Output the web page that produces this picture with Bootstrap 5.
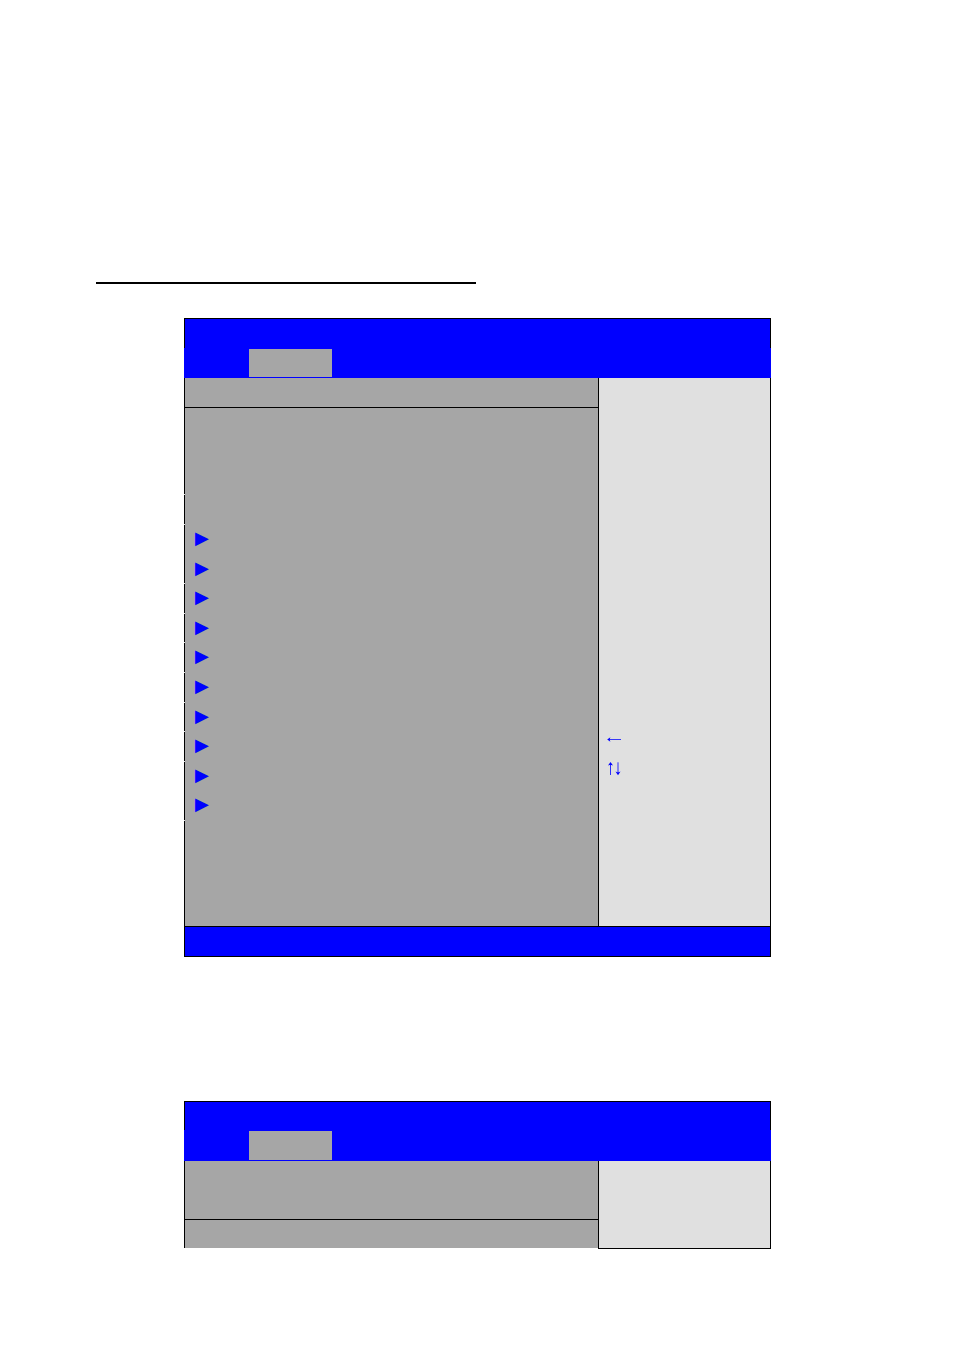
<!DOCTYPE html>
<html lang="en">
<head>
<meta charset="utf-8">
<meta name="viewport" content="width=device-width, initial-scale=1">
<title>BIOS Setup</title>
<link href="https://cdn.jsdelivr.net/npm/bootstrap@5.3.0/dist/css/bootstrap.min.css" rel="stylesheet">
<style>
  :root { --bios-blue: #0000ff; --bios-gray: #a6a6a6; --bios-light: #e0e0e0; }
  body { background: #fff; color: var(--bios-blue); font-family: "Liberation Serif", serif; }
  .page { padding: 282px 96px 101px; }
  .heading-rule { width: 380px; max-width: 100%; height: 2px; background: #000; opacity: 1; border: 0; margin: 0 0 34px; }
  .bios { margin: 0 87px 144px 88px; }
  .bios:last-child { margin-bottom: 0; }
  .bios-title { height: 30px; background: var(--bios-blue); border: 1px solid #000; border-bottom: 0; }
  .bios-tabs { height: 30px; background: var(--bios-blue); padding: 1px 0 1px 65px; }
  .bios-title-short { height: 29px; }
  .bios-tabs-tall { height: 31px; }
  .bios-tab { width: 83px; background: var(--bios-gray); }
  .bios-main { background: var(--bios-gray); border-left: 1px solid #000; }
  .bios-main-open { margin-bottom: 1px; }
  .bios-head { height: 30px; border-bottom: 1px solid #000; }
  .bios-head-tall { height: 59px; }
  .bios-help { width: 173px; background: var(--bios-light); border: 1px solid #000; border-top: 0; border-bottom: 0; }
  .bios-help-closed { border-bottom: 1px solid #000; }
  .bios-foot { height: 31px; background: var(--bios-blue); border: 1px solid #000; }
  .info-rows { padding-top: 86px; }
  .info-row { height: 30px; }
  .menu-rows { height: 296px; }
  .menu-item { padding-left: 10px; font: 18px/27px "DejaVu Sans", sans-serif; }
  /* small breaks in the frame where two rows meet */
  .notch { position: relative; }
  .notch::before { content: ""; position: absolute; left: -1px; top: 0; width: 1px; height: 1px; background: #ddd; }
  .menu-end { height: 106px; }
  .keys { padding: 347px 8px 0; }
  .key-row { height: 29px; }
  .short-row { height: 28px; }
</style>
</head>
<body>
<main class="page">
  <hr class="heading-rule">

  <section class="bios">
    <div class="bios-title"></div>
    <div class="bios-tabs d-flex"><div class="bios-tab"></div></div>
    <div class="d-flex">
      <div class="bios-main flex-grow-1">
        <div class="bios-head"></div>
        <div class="info-rows"><div class="info-row notch"></div></div>
        <ul class="menu-rows list-unstyled d-flex flex-column mb-0">
          <li class="menu-item notch flex-fill">▶</li>
          <li class="menu-item flex-fill">▶</li>
          <li class="menu-item notch flex-fill">▶</li>
          <li class="menu-item notch flex-fill">▶</li>
          <li class="menu-item notch flex-fill">▶</li>
          <li class="menu-item notch flex-fill">▶</li>
          <li class="menu-item notch flex-fill">▶</li>
          <li class="menu-item notch flex-fill">▶</li>
          <li class="menu-item notch flex-fill">▶</li>
          <li class="menu-item flex-fill">▶</li>
        </ul>
        <div class="menu-end notch"></div>
      </div>
      <aside class="bios-help flex-shrink-0">
        <div class="keys">
          <div class="key-row d-flex align-items-center">
            <svg width="15" height="15" viewBox="0 0 15 15" role="img" aria-label="Left arrow">
              <path d="M1 7.5H14" stroke="#00f" stroke-opacity=".75" fill="none"/>
              <path d="M.2 7.5L3.4 5.2L2.6 7.5L3.4 9.8Z" fill="#00f"/>
            </svg>
          </div>
          <div class="key-row d-flex align-items-center">
            <svg width="15" height="15" viewBox="0 0 15 15" role="img" aria-label="Up and down arrows">
              <path d="M3.5 2V14" stroke="#00f" stroke-opacity=".8" fill="none"/>
              <path d="M3.5 1L6 4.6L3.5 3.8L1 4.6Z" fill="#00f"/>
              <path d="M11 1.3V13" stroke="#00f" stroke-opacity=".8" fill="none"/>
              <path d="M11 14.2L8.5 10.6L11 11.4L13.5 10.6Z" fill="#00f"/>
            </svg>
          </div>
        </div>
      </aside>
    </div>
    <div class="bios-foot"></div>
  </section>

  <section class="bios">
    <div class="bios-title bios-title-short"></div>
    <div class="bios-tabs bios-tabs-tall d-flex"><div class="bios-tab"></div></div>
    <div class="d-flex">
      <div class="bios-main bios-main-open flex-grow-1">
        <div class="bios-head bios-head-tall"></div>
        <div class="short-row"></div>
      </div>
      <aside class="bios-help bios-help-closed flex-shrink-0"></aside>
    </div>
  </section>
</main>
<script src="https://cdn.jsdelivr.net/npm/bootstrap@5.3.0/dist/js/bootstrap.bundle.min.js"></script>
</body>
</html>
